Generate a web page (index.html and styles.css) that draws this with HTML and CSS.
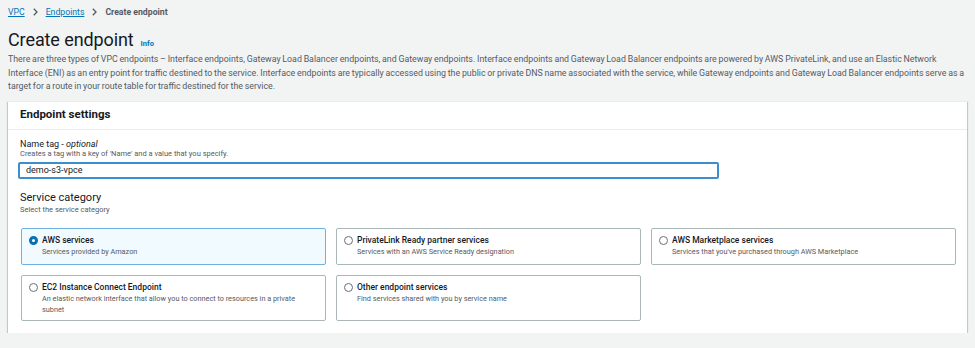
FILE: index.html
```html
<!DOCTYPE html>
<html lang="en">
<head>
  <meta charset="UTF-8">
  <title>Create endpoint</title>
  <link rel="stylesheet" href="styles.css">
</head>
<body>
  <nav class="breadcrumbs">
    <a href="#">VPC</a>
    <svg class="sep" width="5" height="8" viewBox="0 0 5 8"><path d="M0.8 0.8 L4 4 L0.8 7.2" fill="none" stroke="#545b64" stroke-width="1.3"/></svg>
    <a href="#">Endpoints</a>
    <svg class="sep" width="5" height="8" viewBox="0 0 5 8"><path d="M0.8 0.8 L4 4 L0.8 7.2" fill="none" stroke="#545b64" stroke-width="1.3"/></svg>
    <span class="current">Create endpoint</span>
  </nav>

  <header class="page-head">
    <h1>Create endpoint <a class="info" href="#">Info</a></h1>
    <p class="desc">There are three types of VPC endpoints – Interface endpoints, Gateway Load Balancer endpoints, and Gateway endpoints. Interface endpoints and Gateway Load Balancer endpoints are powered by AWS PrivateLink, and use an Elastic Network Interface (ENI) as an entry point for traffic destined to the service. Interface endpoints are typically accessed using the public or private DNS name associated with the service, while Gateway endpoints and Gateway Load Balancer endpoints serve as a target for a route in your route table for traffic destined for the service.</p>
  </header>

  <section class="panel">
    <div class="panel-head">Endpoint settings</div>
    <div class="panel-body">
      <div class="field">
        <label class="label">Name tag - <em>optional</em></label>
        <div class="hint">Creates a tag with a key of 'Name' and a value that you specify.</div>
        <input class="text-input" type="text" value="demo-s3-vpce">
      </div>

      <div class="field">
        <h3 class="section-title">Service category</h3>
        <div class="hint">Select the service category</div>
        <div class="tiles">
          <label class="tile selected">
            <span class="radio on"></span>
            <span class="tile-text">
              <span class="tile-title">AWS services</span>
              <span class="tile-sub">Services provided by Amazon</span>
            </span>
          </label>
          <label class="tile">
            <span class="radio"></span>
            <span class="tile-text">
              <span class="tile-title">PrivateLink Ready partner services</span>
              <span class="tile-sub">Services with an AWS Service Ready designation</span>
            </span>
          </label>
          <label class="tile">
            <span class="radio"></span>
            <span class="tile-text">
              <span class="tile-title">AWS Marketplace services</span>
              <span class="tile-sub">Services that you've purchased through AWS Marketplace</span>
            </span>
          </label>
          <label class="tile tall">
            <span class="radio"></span>
            <span class="tile-text">
              <span class="tile-title">EC2 Instance Connect Endpoint</span>
              <span class="tile-sub">An elastic network interface that allow you to connect to resources in a private subnet</span>
            </span>
          </label>
          <label class="tile tall">
            <span class="radio"></span>
            <span class="tile-text">
              <span class="tile-title">Other endpoint services</span>
              <span class="tile-sub">Find services shared with you by service name</span>
            </span>
          </label>
        </div>
      </div>
    </div>
  </section>
</body>
</html>
```

FILE: styles.css
```css
* {
  margin: 0;
  padding: 0;
  box-sizing: border-box;
}

body {
  background: #f2f3f3;
  font-family: Roboto, "Liberation Sans", sans-serif;
  color: #16191f;
  padding: 5px 8px 0 8px;
}

.breadcrumbs {
  display: flex;
  align-items: center;
  gap: 8px;
  font-size: 8.7px;
  height: 14px;
}

.breadcrumbs a {
  color: #0073bb;
  text-decoration: underline;
}

.breadcrumbs .current {
  color: #545b64;
  font-weight: 700;
}

.page-head {
  margin-top: 11px;
}

h1 {
  font-size: 18px;
  font-weight: 400;
  line-height: 20px;
  letter-spacing: -0.1px;
  display: flex;
  align-items: baseline;
  gap: 7px;
}

h1 .info {
  font-size: 7.5px;
  font-weight: 700;
  letter-spacing: 0;
  color: #0073bb;
  text-decoration: none;
}

.desc {
  font-size: 8.8px;
  line-height: 13.5px;
  word-spacing: -0.4px;
  color: #545b64;
  margin-top: -1px;
}

.panel {
  margin-top: 7px;
  width: 959px;
  background: #fff;
  box-shadow: 0 1px 1px 0 rgba(0, 28, 36, 0.3), 1px 1px 1px 0 rgba(0, 28, 36, 0.15), -1px 1px 1px 0 rgba(0, 28, 36, 0.15);
  border-top: 1px solid #eaeded;
}

.panel-head {
  font-size: 11.5px;
  font-weight: 700;
  padding: 5px 12px;
  height: 28px;
  line-height: 15px;
  border-bottom: 1px solid #eaeded;
}

.panel-body {
  padding: 9px 12px 12px 12px;
}

.label {
  display: block;
  font-size: 9px;
  line-height: 10px;
}

.label em {
  font-style: italic;
}

.hint {
  font-size: 7.5px;
  line-height: 9px;
  color: #545b64;
}

.text-input {
  display: block;
  margin-top: 4px;
  width: 701px;
  height: 17px;
  border: 2px solid #3b8fd1;
  border-radius: 2px;
  padding: 0 6px;
  font-family: inherit;
  font-size: 9px;
  color: #16191f;
  outline: none;
  margin-left: -2px;
}

.field + .field {
  margin-top: 11px;
}

.section-title {
  font-size: 11px;
  font-weight: 400;
  line-height: 15px;
}

.tiles {
  margin-top: 14px;
  display: grid;
  grid-template-columns: 305px 305px 305px;
  gap: 10px;
  padding-left: 1px;
}

.tile {
  display: flex;
  gap: 4px;
  align-items: flex-start;
  height: 37px;
  border: 1px solid #aab7b8;
  border-radius: 2px;
  padding: 5px 7px;
  background: #fff;
}

.tile.tall {
  height: 46px;
}

.tile.selected {
  background: #f1faff;
  border-color: #6fb1e0;
}

.radio {
  flex: none;
  width: 9px;
  height: 9px;
  margin-top: 2px;
  border: 1px solid #687078;
  border-radius: 50%;
  background: #fff;
}

.radio.on {
  border: 3px solid #0073bb;
}

.tile-text {
  display: flex;
  flex-direction: column;
}

.tile-title {
  font-size: 8.5px;
  font-weight: 500;
  line-height: 12px;
}

.tile-sub {
  font-size: 7.3px;
  line-height: 11px;
  color: #545b64;
}
```
